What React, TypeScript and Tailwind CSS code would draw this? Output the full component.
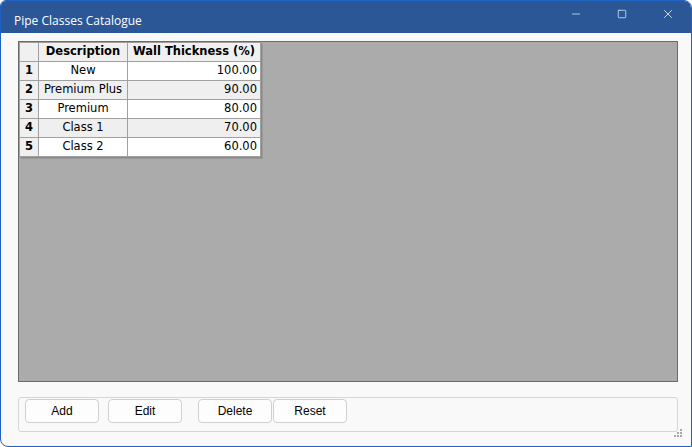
import { Minus, Square, X } from 'lucide-react';

const rows = [
  { id: 1, name: 'New', wall: '100.00' },
  { id: 2, name: 'Premium Plus', wall: '90.00' },
  { id: 3, name: 'Premium', wall: '80.00' },
  { id: 4, name: 'Class 1', wall: '70.00' },
  { id: 5, name: 'Class 2', wall: '60.00' },
];

const buttons = [
  { label: 'Add', cls: 'ml-[6px]' },
  { label: 'Edit', cls: 'ml-[9px]' },
  { label: 'Delete', cls: 'ml-[16px]' },
  { label: 'Reset', cls: 'ml-[1px]' },
];

const App = () => {
  return (
    <div className="w-[692px] h-[447px] overflow-hidden bg-white">
      <div className="w-full h-full flex flex-col rounded-tr-[8px] rounded-bl-[8px] rounded-tl-[6px] border border-[#1f62c6] overflow-hidden bg-[#f9f9f9]">
        {/* Title bar */}
        <div className="h-[32px] shrink-0 bg-[#2b5797] flex items-start text-white">
          <span className="pl-[13px] pt-[12px] leading-[16px] text-[12px] font-['Open_Sans',sans-serif]">
            Pipe Classes Catalogue
          </span>
          <div className="ml-auto flex items-center h-[26px]">
            <div className="w-[46px] h-full flex items-center justify-center">
              <Minus className="w-[12px] h-[12px]" strokeWidth={1.3} />
            </div>
            <div className="w-[46px] h-full flex items-center justify-center">
              <Square className="w-[10px] h-[10px]" strokeWidth={1.6} />
            </div>
            <div className="w-[46px] h-full flex items-center justify-center">
              <X className="w-[14px] h-[14px]" strokeWidth={1.3} />
            </div>
          </div>
        </div>

        {/* Body */}
        <div className="flex-1 flex flex-col pl-[17px] pr-[13px] pt-[8px] relative">
          <div className="h-[341px] bg-[#ababab] border border-[#6b6b6b] flex items-start">
            <table className="border-collapse font-['DejaVu_Sans',sans-serif] text-[11.5px] text-black shadow-[1px_1px_0_#8a8a8a,2px_2px_0_#9a9a9a]">
              <thead>
                <tr className="h-[19px]">
                  <th className="w-[19px] bg-[#f0f0f0] border border-[#a0a0a0]"></th>
                  <th className="w-[89px] bg-[#f0f0f0] border border-[#a0a0a0] font-bold px-[3px]">Description</th>
                  <th className="w-[133px] bg-[#f0f0f0] border border-[#a0a0a0] font-bold px-[3px]">Wall Thickness (%)</th>
                </tr>
              </thead>
              <tbody>
                {rows.map((r) => {
                  const alt = r.id % 2 === 0;
                  return (
                    <tr key={r.id} className="h-[19px]">
                      <td className="bg-[#f0f0f0] border border-[#a0a0a0] font-bold text-center">{r.id}</td>
                      <td className={`border border-[#a0a0a0] text-center ${alt ? 'bg-[#efefef]' : 'bg-white'}`}>{r.name}</td>
                      <td className={`border border-[#a0a0a0] text-right pr-[3px] ${alt ? 'bg-[#efefef]' : 'bg-white'}`}>{r.wall}</td>
                    </tr>
                  );
                })}
              </tbody>
            </table>
          </div>

          {/* Button strip */}
          <div className="mt-[15px] h-[35px] border border-[#d6d6d6] rounded-[3px] flex items-start pt-[1px]">
            {buttons.map((b) => (
              <button
                key={b.label}
                className={`${b.cls} w-[74px] h-[24px] bg-[#fdfdfd] border border-[#d0d0d0] rounded-[4px] text-[12px] text-black font-['Liberation_Sans',sans-serif]`}
              >
                {b.label}
              </button>
            ))}
          </div>

          {/* Resize grip */}
          <div className="absolute right-[9px] bottom-[9px] grid grid-cols-3 gap-[1px]">
            <span className="w-[2px] h-[2px]" />
            <span className="w-[2px] h-[2px]" />
            <span className="w-[2px] h-[2px] bg-[#a8a8a8]" />
            <span className="w-[2px] h-[2px]" />
            <span className="w-[2px] h-[2px] bg-[#a8a8a8]" />
            <span className="w-[2px] h-[2px] bg-[#a8a8a8]" />
            <span className="w-[2px] h-[2px] bg-[#a8a8a8]" />
            <span className="w-[2px] h-[2px] bg-[#a8a8a8]" />
            <span className="w-[2px] h-[2px] bg-[#a8a8a8]" />
          </div>
        </div>
      </div>
    </div>
  );
};

export default App;
